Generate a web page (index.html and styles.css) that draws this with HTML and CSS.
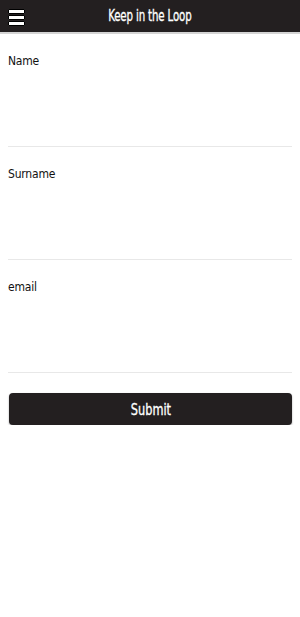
FILE: index.html
```html
<!DOCTYPE html>
<html lang="en">

<head>
  <meta charset="UTF-8">
  <meta name="viewport" content="width=device-width, initial-scale=1.0">
  <title>Keep in the Loop</title>
  <link rel="stylesheet" href="styles.css">
</head>

<body>
  <header class="topbar">
    <button class="menu-btn" aria-label="Menu">
      <span class="bar"></span>
      <span class="bar"></span>
      <span class="bar"></span>
    </button>
    <h1 class="title">Keep in the Loop</h1>
  </header>

  <form class="signup">
    <div class="field">
      <label for="name">Name</label>
      <input id="name" type="text">
    </div>
    <div class="field">
      <label for="surname">Surname</label>
      <input id="surname" type="text">
    </div>
    <div class="field">
      <label for="email">email</label>
      <input id="email" type="email">
    </div>
    <button type="button" class="submit"><span class="submit-text">Submit</span></button>
  </form>
</body>

</html>
```

FILE: styles.css
```css
body {
  margin: 0;
  padding: 0;
  background: #fff;
  font-family: "DejaVu Sans", sans-serif;
  font-stretch: condensed;
  color: #111;
}

.topbar {
  position: relative;
  height: 32px;
  background-color: #231f20;
  border-bottom: 2px solid #d4d4d4;
  display: flex;
  align-items: center;
  justify-content: center;
}

.menu-btn {
  position: absolute;
  left: 8px;
  top: 9px;
  width: 17px;
  padding: 0;
  border: none;
  background: none;
  display: flex;
  flex-direction: column;
  gap: 1px;
}

.bar {
  display: block;
  height: 3px;
  background: #fff;
  border: 1px solid #000;
  border-radius: 1px;
}

.title {
  margin: 0;
  color: #fff;
  font-size: 15px;
  font-weight: normal;
  letter-spacing: -0.2px;
  transform: scaleX(0.76);
  -webkit-text-stroke: 0.3px #fff;
}

.signup {
  padding: 20px 8px 0;
}

.field {
  height: 92px;
  border-bottom: 1px solid #e8e8e8;
  margin-bottom: 20px;
}

.field label {
  display: block;
  font-size: 12px;
  line-height: 15px;
  letter-spacing: -0.2px;
}

.field input {
  display: block;
  width: 100%;
  height: 60px;
  border: none;
  outline: none;
  padding: 0;
  background: transparent;
}

.submit {
  display: block;
  width: 283px;
  margin: 2px 0 0 1px;
  height: 32px;
  padding-top: 2px;
  background-color: #231f20;
  color: #fff;
  border: none;
  border-radius: 4px;
  box-shadow: 0 1px 2px rgba(0, 0, 0, 0.35);
  font-family: inherit;
  font-stretch: inherit;
  font-size: 15px;
  cursor: pointer;
}

.submit-text {
  display: inline-block;
  transform: scaleX(0.84);
  -webkit-text-stroke: 0.3px #fff;
}
```
